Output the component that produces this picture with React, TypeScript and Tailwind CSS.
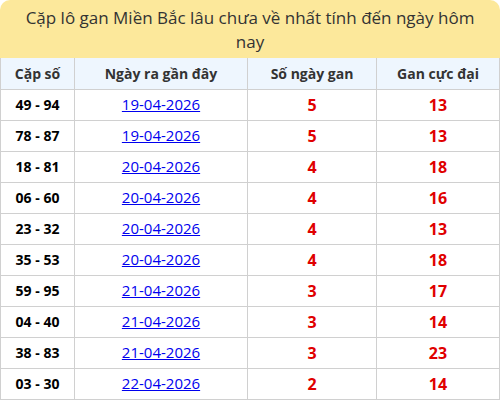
type Row = {
  pair: string;
  date: string;
  days: number;
  max: number;
};

const rows: Row[] = [
  { pair: "49 - 94", date: "19-04-2026", days: 5, max: 13 },
  { pair: "78 - 87", date: "19-04-2026", days: 5, max: 13 },
  { pair: "18 - 81", date: "20-04-2026", days: 4, max: 18 },
  { pair: "06 - 60", date: "20-04-2026", days: 4, max: 16 },
  { pair: "23 - 32", date: "20-04-2026", days: 4, max: 13 },
  { pair: "35 - 53", date: "20-04-2026", days: 4, max: 18 },
  { pair: "59 - 95", date: "21-04-2026", days: 3, max: 17 },
  { pair: "04 - 40", date: "21-04-2026", days: 3, max: 14 },
  { pair: "38 - 83", date: "21-04-2026", days: 3, max: 23 },
  { pair: "03 - 30", date: "22-04-2026", days: 2, max: 14 },
];

export default function App() {
  return (
    <div className="w-[500px] h-[400px] overflow-hidden bg-white font-['Open_Sans',sans-serif]">
      {/* Title */}
      <div className="h-[58px] rounded-t-[10px] bg-[#fce89b] px-4 pt-[6px] text-center text-[17px] leading-[24px] font-medium text-[#333]">
        Cặp lô gan Miền Bắc lâu chưa về nhất tính đến ngày hôm nay
      </div>

      <table className="w-[499px] border-collapse table-fixed">
        <colgroup>
          <col className="w-[74px]" />
          <col className="w-[173px]" />
          <col className="w-[129px]" />
          <col className="w-[123px]" />
        </colgroup>
        <thead>
          <tr className="h-[31px] bg-[#eef6fe] text-[14px] font-semibold text-[#333]">
            <th className="border border-t-0 border-[#d0d0d0]">Cặp số</th>
            <th className="border border-t-0 border-[#d0d0d0]">Ngày ra gần đây</th>
            <th className="border border-t-0 border-[#d0d0d0]">Số ngày gan</th>
            <th className="border border-t-0 border-[#d0d0d0]">Gan cực đại</th>
          </tr>
        </thead>
        <tbody>
          {rows.map((row, index) => (
            <tr key={index} className="h-[31px] text-center">
              <td className="border border-[#d0d0d0] text-[14px] font-bold text-black">
                {row.pair}
              </td>
              <td className="border border-[#d0d0d0] text-[15px]">
                <a href="#" className="text-[#0000ee] underline">
                  {row.date}
                </a>
              </td>
              <td className="border border-[#d0d0d0] text-[16px] font-bold text-[#e00000]">
                {row.days}
              </td>
              <td className="border border-[#d0d0d0] text-[16px] font-bold text-[#e00000]">
                {row.max}
              </td>
            </tr>
          ))}
        </tbody>
      </table>
    </div>
  );
}
